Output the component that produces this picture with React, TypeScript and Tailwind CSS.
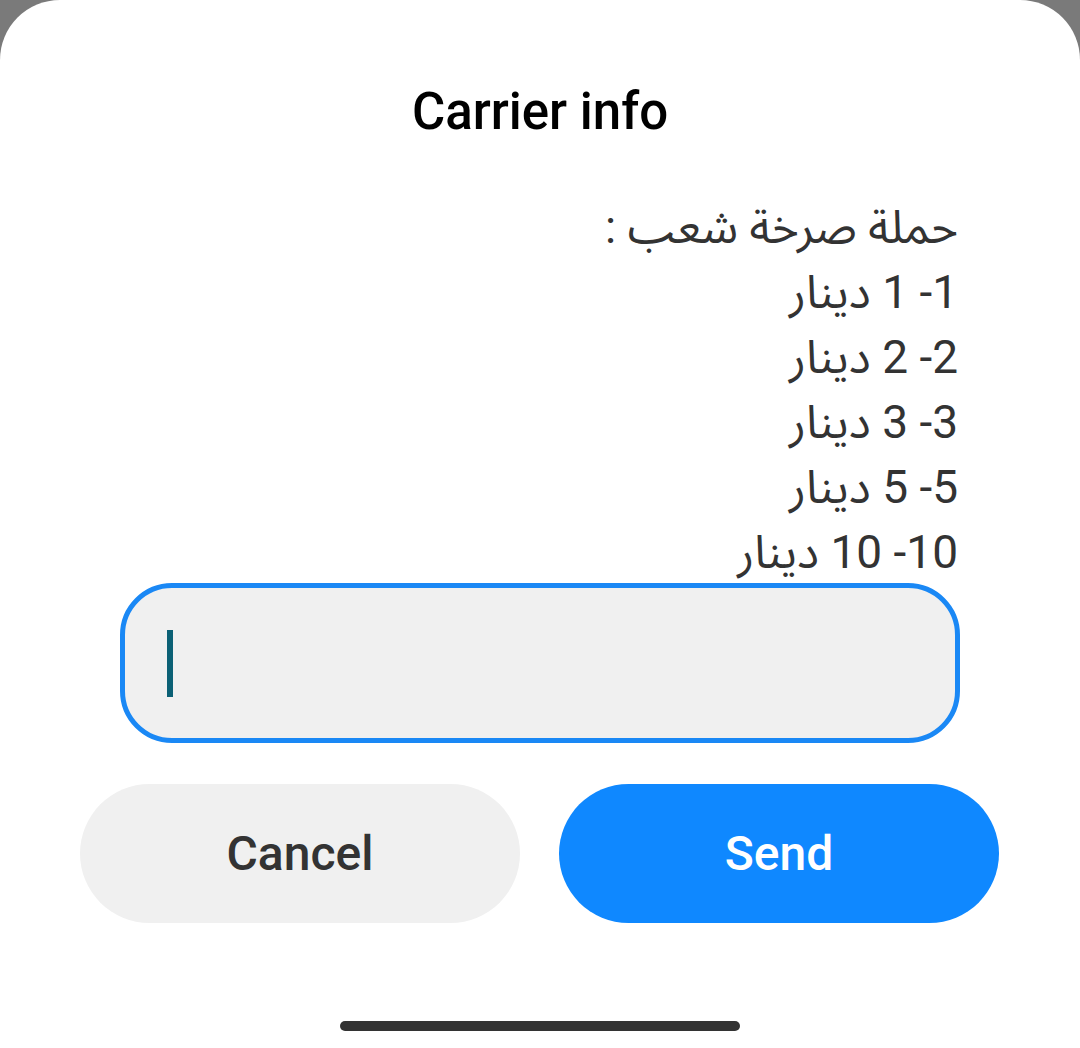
const lines = [
  "حملة صرخة شعب :",
  "1- 1 دينار",
  "2- 2 دينار",
  "3- 3 دينار",
  "5- 5 دينار",
  "10- 10 دينار",
];

export default function App() {
  return (
    <div
      className="w-[1080px] h-[1048px] bg-[#7a7a7a] overflow-hidden"
      style={{ fontFamily: 'Roboto, "Noto Sans Arabic", "DejaVu Sans", sans-serif' }}
    >
      <div className="h-full bg-white rounded-t-[60px] flex flex-col items-center">
        <h1 className="mt-[84px] text-[51px] leading-[56px] font-medium text-black">Carrier info</h1>

        <div dir="rtl" className="mt-[55px] w-[840px] pr-[2px] text-[#333] text-[46px] leading-[65px]">
          {lines.map((l) => (
            <div key={l}>{l}</div>
          ))}
        </div>

        <div className="mt-[-2px] w-[840px] h-[160px] rounded-[52px] border-[5px] border-[#1a88f5] bg-[#f0f0f0] flex items-center pl-[42px]">
          <div className="w-[6px] h-[67px] bg-[#0b6075]" />
        </div>

        <div className="mt-[41px] w-[920px] flex gap-[39px]">
          <button className="w-[440px] h-[139px] rounded-full bg-[#f0f0f0] text-[#333] text-[48px] font-medium">
            Cancel
          </button>
          <button className="w-[440px] h-[139px] rounded-full bg-[#0f88ff] text-white text-[48px] font-medium">
            Send
          </button>
        </div>

        <div className="mt-auto mb-[17px] w-[400px] h-[10px] rounded-full bg-[#333]" />
      </div>
    </div>
  );
}
